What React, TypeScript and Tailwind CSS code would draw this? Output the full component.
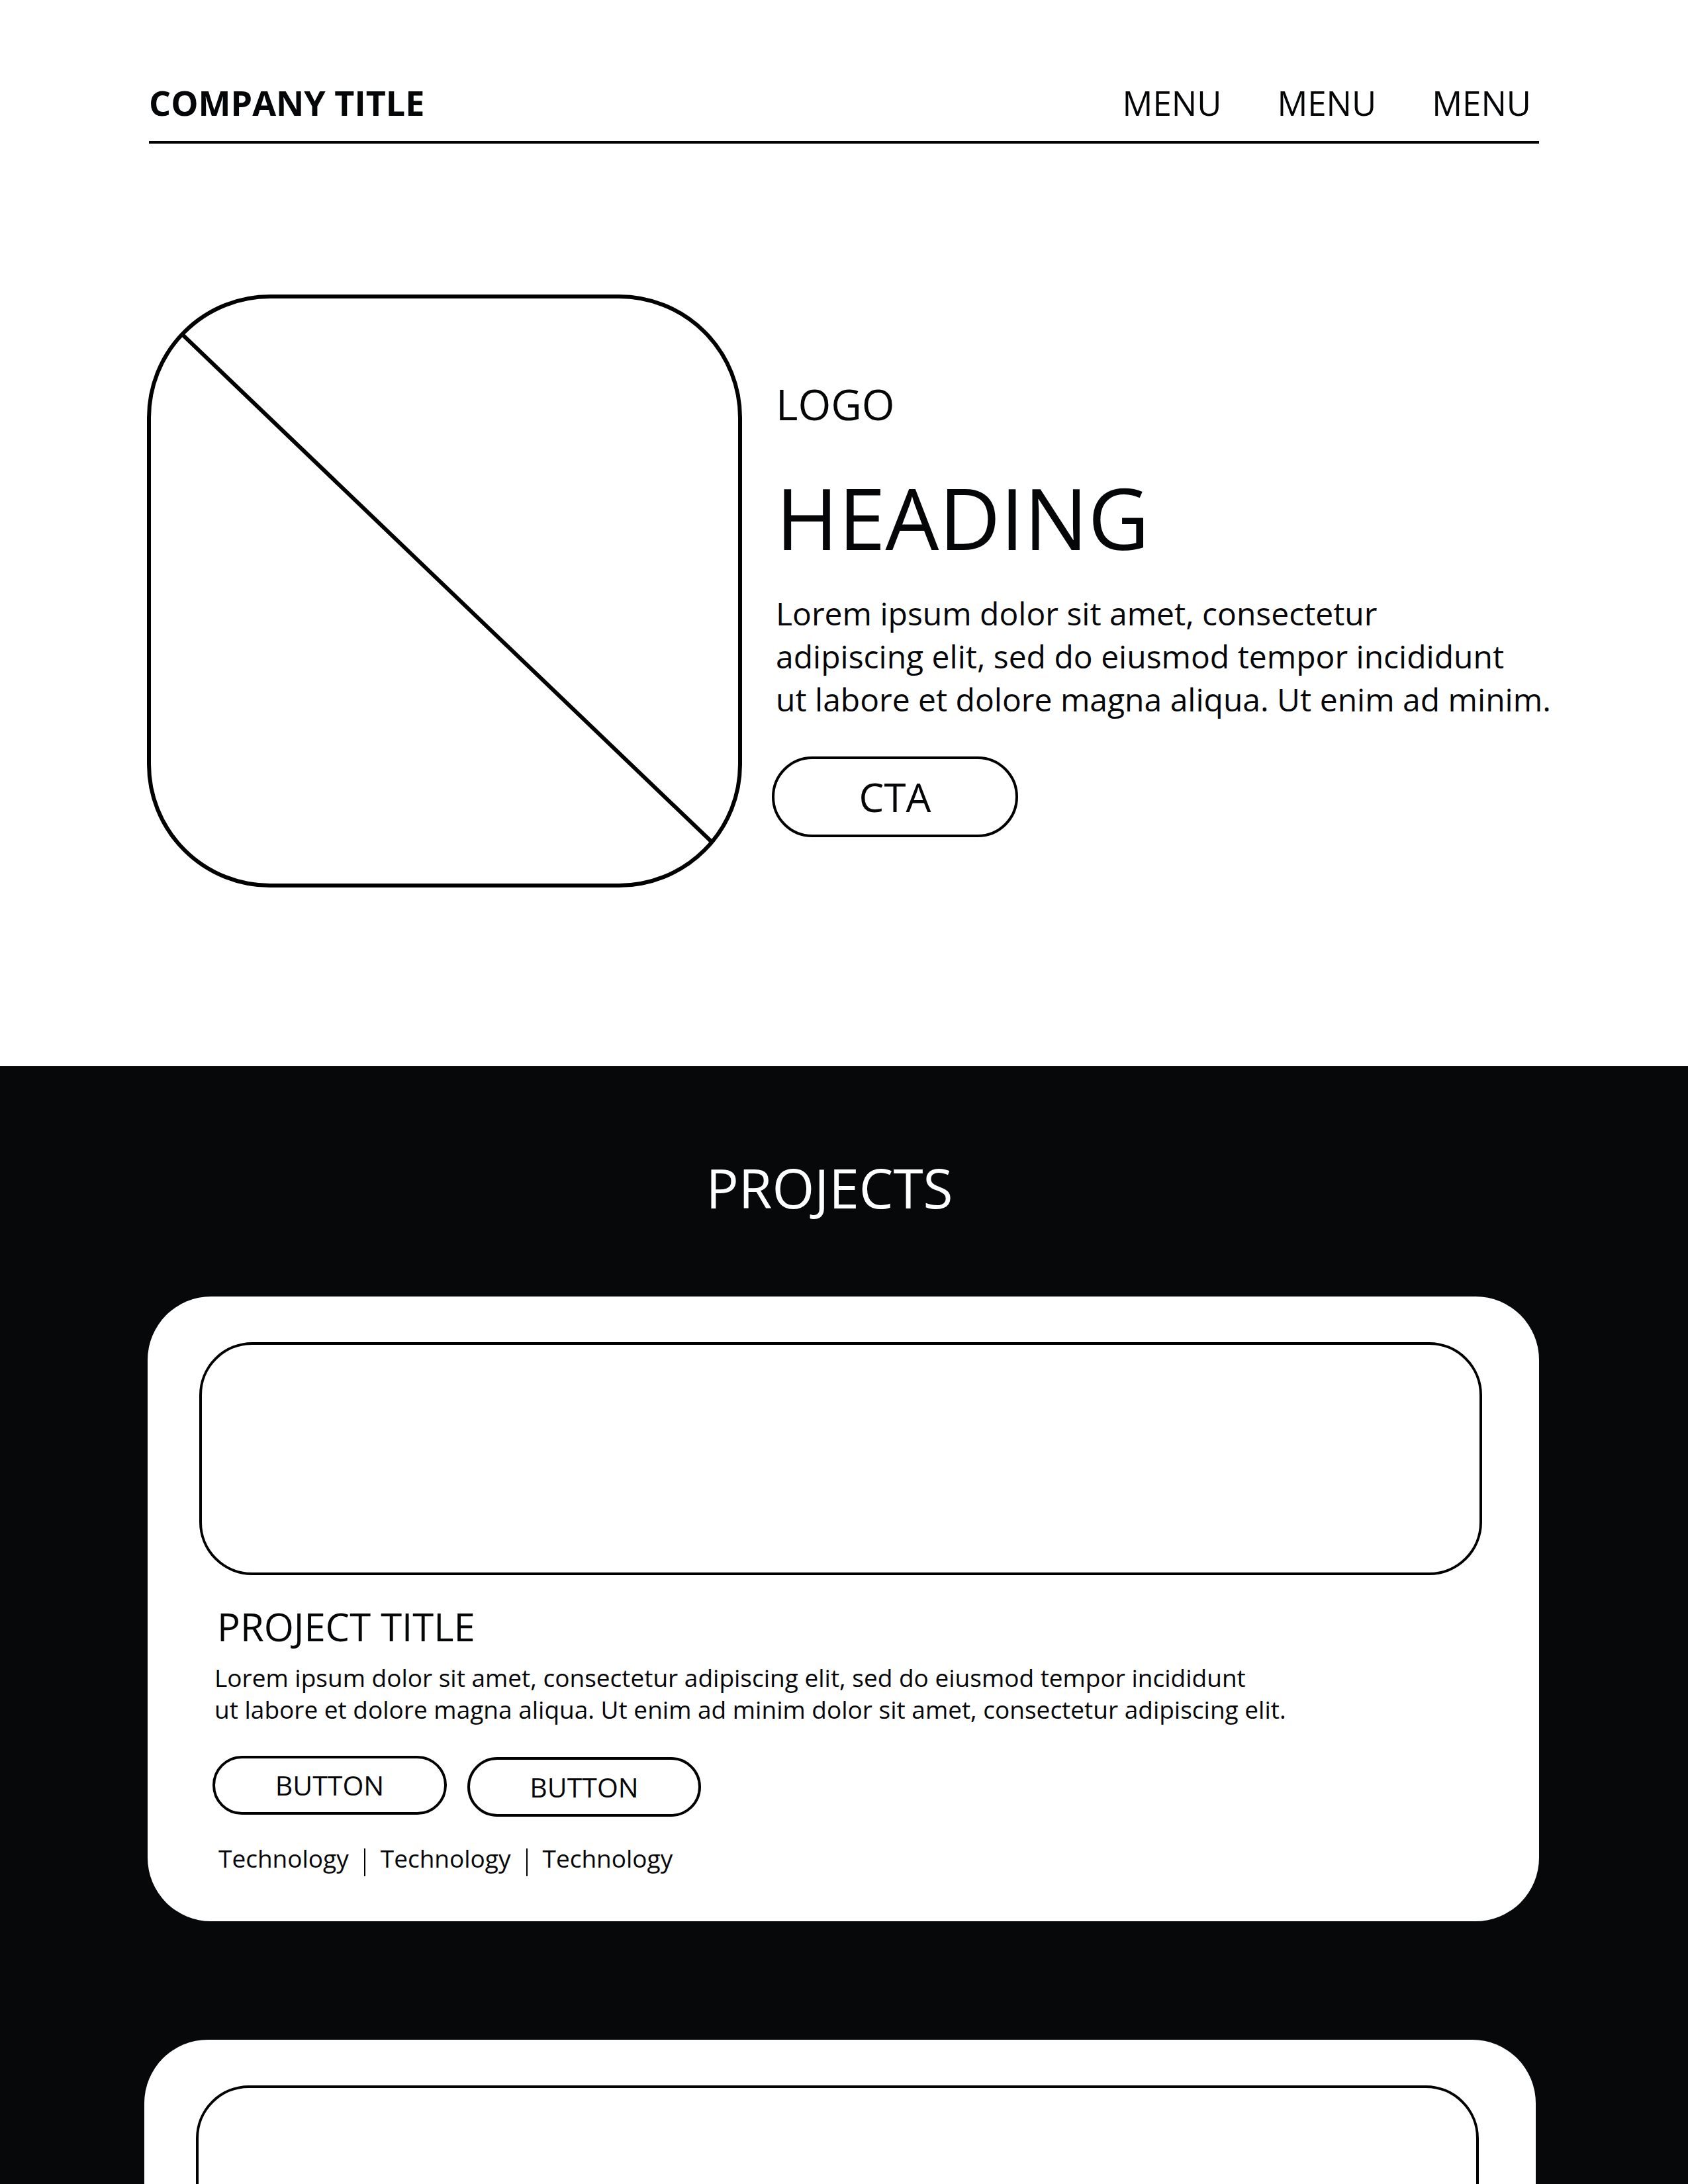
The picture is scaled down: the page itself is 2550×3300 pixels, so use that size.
const menus = ["MENU", "MENU", "MENU"];
const techs = ["Technology", "Technology", "Technology"];

function ImagePlaceholder() {
  return (
    <div className="relative -ml-[3px] h-[896px] w-[899px] shrink-0 rounded-[186px] border-[6px] border-black">
      <svg className="absolute inset-0 h-full w-full" viewBox="0 0 887 884" fill="none">
        <line x1="46" y1="53" x2="846" y2="820" stroke="black" strokeWidth="6" />
      </svg>
    </div>
  );
}

function ProjectCard({ shift = false, preview = false }: { shift?: boolean; preview?: boolean }) {
  return (
    <div
      className={`h-[944px] w-[2102px] rounded-[96px] bg-white pl-[78px] pt-[69px] ${
        shift ? "ml-[218px]" : "ml-[223px]"
      }`}
    >
      <div className="h-[352px] w-[1938px] rounded-[80px] border-4 border-black" />
      {!preview && (
        <>
          <div className="pl-[23px]">
            <h3 className="mt-[49px] ml-[4px] text-[58px] leading-none">PROJECT TITLE</h3>
            <p className="mt-[24px] whitespace-nowrap text-[37px] leading-[48px]">
              Lorem ipsum dolor sit amet, consectetur adipiscing elit, sed do eiusmod tempor incididunt
              <br />
              ut labore et dolore magna aliqua. Ut enim ad minim dolor sit amet, consectetur adipiscing elit.
            </p>
          </div>
          <div className="mt-[46px] flex items-start gap-[31px] pl-[20px]">
            <button className="flex h-[89px] w-[354px] items-center justify-center rounded-full border-4 border-black text-[41px] leading-none">
              BUTTON
            </button>
            <button className="mt-[2px] flex h-[90px] w-[353px] items-center justify-center rounded-full border-4 border-black text-[41px] leading-none">
              BUTTON
            </button>
          </div>
          <div className="mt-[44px] flex items-start pl-[29px] text-[37px] leading-none">
            {techs.map((t, i) => (
              <div key={i} className="flex items-start">
                {i > 0 && <span className="mx-[23px] mt-[4px] h-[42px] w-[2px] bg-black" />}
                <span>{t}</span>
              </div>
            ))}
          </div>
        </>
      )}
    </div>
  );
}

export default function App() {
  return (
    <div className="h-[3300px] w-[2550px] overflow-hidden bg-white font-['Open_Sans',sans-serif] text-[#050608]">
      <section className="h-[1611px]">
        <header className="ml-[225px] flex w-[2100px] items-baseline justify-between border-b-4 border-black pb-[32px] pt-[129px]">
          <p className="text-[52px] font-bold leading-none">COMPANY TITLE</p>
          <nav className="flex gap-[84px] pr-[12px]">
            {menus.map((m, i) => (
              <a key={i} className="text-[51px] leading-none">
                {m}
              </a>
            ))}
          </nav>
        </header>

        <div className="ml-[225px] mt-[228px] flex w-[2100px] items-start gap-[51px]">
          <ImagePlaceholder />
          <div className="flex flex-col items-start pt-[134px]">
            <p className="text-[64px] leading-none">LOGO</p>
            <h1 className="mt-[75px] text-[128px] leading-none">HEADING</h1>
            <p className="mt-[48px] whitespace-nowrap text-[48px] leading-[65px]">
              Lorem ipsum dolor sit amet, consectetur
              <br />
              adipiscing elit, sed do eiusmod tempor incididunt
              <br />
              ut labore et dolore magna aliqua. Ut enim ad minim.
            </p>
            <button className="-ml-[6px] mt-[54px] flex h-[122px] w-[372px] items-center justify-center rounded-full border-4 border-black text-[60px] leading-none">
              CTA
            </button>
          </div>
        </div>
      </section>

      <section className="h-[1689px] bg-[#06080a] pt-[142px]">
        <h2 className="pr-[44px] text-center text-[82px] leading-none text-white">PROJECTS</h2>
        <div className="mt-[124px]">
          <ProjectCard />
        </div>
        <div className="mt-[179px]">
          <ProjectCard shift preview />
        </div>
      </section>
    </div>
  );
}
